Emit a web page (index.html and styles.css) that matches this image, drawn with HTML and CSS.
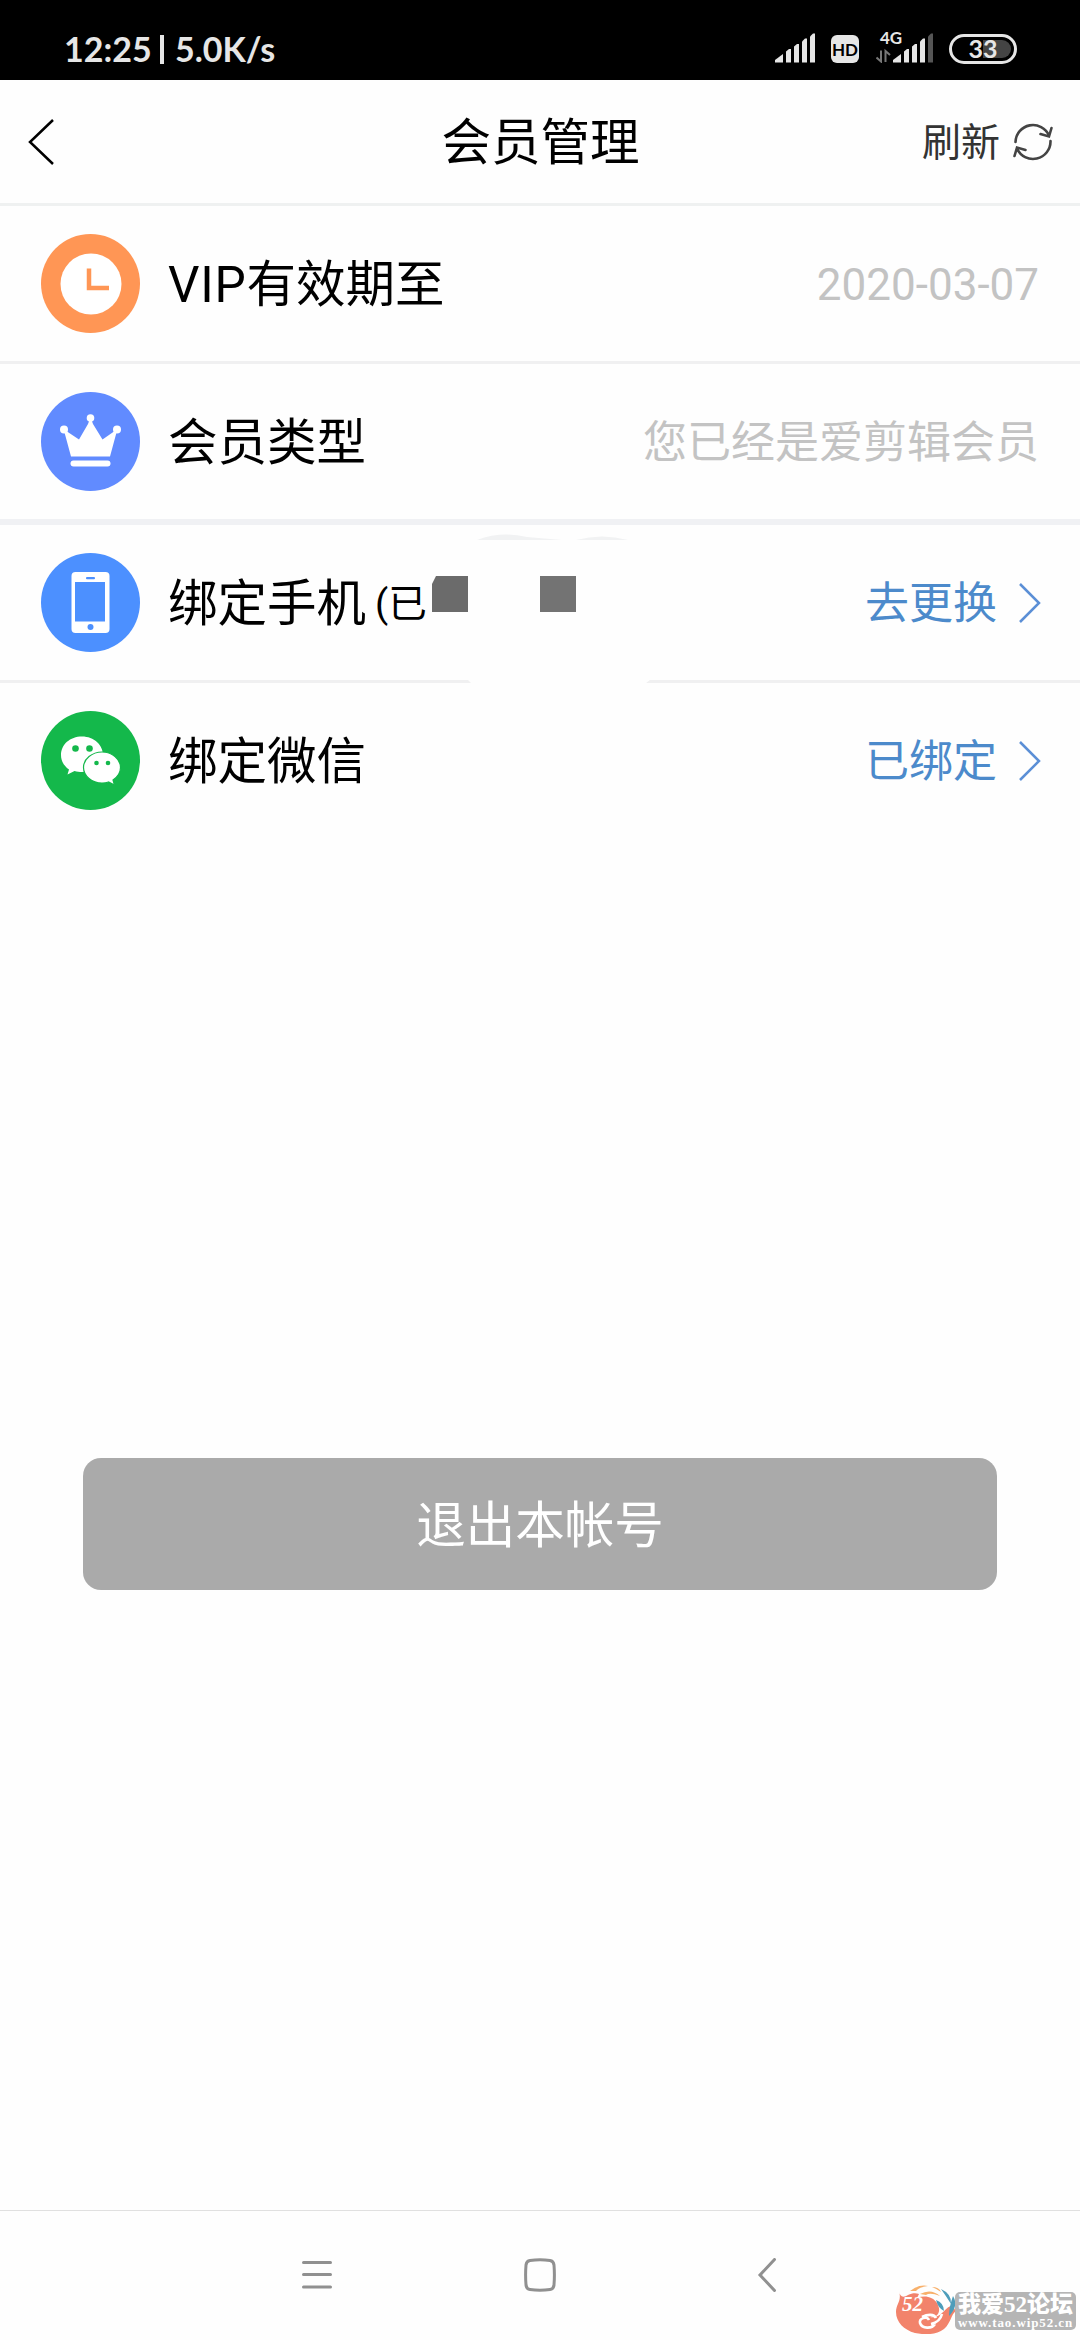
FILE: index.html
```
<!DOCTYPE html>
<html lang="zh-CN">
<head>
  <meta charset="UTF-8" />
  <meta name="viewport" content="width=device-width, initial-scale=1.0"/>
  <title>会员管理</title>
  <link rel="stylesheet" href="styles.css">
</head>
<body>
  <div class="status-bar">
    <div class="status-left">
      <span class="time">12:25</span>
      <span class="divider"></span>
      <span class="speed">5.0K/s</span>
    </div>
    <div class="status-right">
      <svg class="signal" width="41" height="30" viewBox="0 0 41 30" fill="#e6e6e6">
        <path d="M0 29.500v-2.500l8-6v8.500z"/>
        <path d="M11 29.500v-11l3-2.500h2v13.500z"/>
        <path d="M19 29.500v-16l3-2.500h2v18.500z"/>
        <path d="M27 29.500v-21l3-3h2v24z"/>
        <path d="M35 29.500v-26l3-3h2v29z"/>
      </svg>
      <span class="hd">HD</span>
      <div class="mobile">
        <span class="net">4G</span>
        <svg width="58" height="30" viewBox="0 0 58 30" fill="#e6e6e6">
          <path d="M5 17.500v11l-4.500-4M9.500 29v-11l4.500 4" fill="none" stroke="#777" stroke-width="2"/>
          <path d="M17 29.500v-2.500l8-6v8.500z"/>
          <path d="M28 29.500v-11l3-2.500h2v13.500z"/>
          <path d="M36 29.500v-16l3-2.500h2v18.500z"/>
          <path d="M44 29.500v-21l3-3h2v24z"/>
          <path d="M52 29.500v-26l3-3h2v29z" fill="#555"/>
        </svg>
      </div>
      <div class="battery"><span>33</span></div>
    </div>
  </div>

  <header class="header">
    <svg class="back" width="26" height="46" viewBox="0 0 26 46" fill="none" stroke="#000" stroke-width="2.500">
      <path d="M25 1L2 23l23 22"/>
    </svg>
    <h1>会员管理</h1>
    <div class="refresh">
      <span>刷新</span>
      <svg width="40" height="38" viewBox="0 0 40 38" fill="none" stroke="#444" stroke-width="2.600" stroke-linecap="round">
        <path d="M2.500 19A17.500 17.500 0 0 1 36 12.500M27.500 11l8.500 2.500 2.500-8.500"/>
        <path d="M37.500 18A17.500 17.500 0 0 1 4 25.500M12.500 27L4 24.500 1.500 33"/>
      </svg>
    </div>
  </header>

  <main class="list">
    <div class="row">
      <svg class="icon" viewBox="0 0 99 99">
        <circle cx="49.500" cy="49.500" r="49.500" fill="#ff9655"/>
        <circle cx="50" cy="50" r="30.500" fill="#fff"/>
        <path d="M48 34.500v19.500h20" fill="none" stroke="#ff9655" stroke-width="4.500"/>
      </svg>
      <span class="label"><span class="vip">VIP</span>有效期至</span>
      <span class="value">2020-03-07</span>
    </div>

    <div class="row thick">
      <svg class="icon" viewBox="0 0 99 99">
        <circle cx="49.500" cy="49.500" r="49.500" fill="#618bff"/>
        <g fill="#fff">
          <circle cx="49.500" cy="26" r="3.800"/>
          <circle cx="23" cy="37.500" r="4"/>
          <circle cx="76" cy="37.500" r="4"/>
          <path d="M48.500 28h2l1.500 4 9.500 15.500L73 39.500l2.500 1L69 64.500H30L23.500 40.500l2.500-1 12 8L47 32z"/>
          <rect x="29.500" y="68.500" width="40" height="6" rx="3"/>
        </g>
      </svg>
      <span class="label">会员类型</span>
      <span class="value">您已经是爱剪辑会员</span>
    </div>

    <div class="row">
      <svg class="icon" viewBox="0 0 99 99">
        <circle cx="49.500" cy="49.500" r="49.500" fill="#4c90ff"/>
        <rect x="30.500" y="19" width="38" height="61" rx="4" fill="#fff"/>
        <rect x="34" y="29" width="30" height="39.500" fill="#4c90ff"/>
        <rect x="45" y="24" width="9" height="2.200" rx="1" fill="#4c90ff"/>
        <circle cx="49.500" cy="74" r="3" fill="#4c90ff"/>
      </svg>
      <span class="label">绑定手机</span>
      <span class="note">(已</span>
      <span class="action">去更换</span>
      <svg class="arrow" viewBox="0 0 22 40"><path d="M1 1l19 19L1 39"/></svg>
      <!-- hidden phone number -->
      <svg class="mask" width="186" height="152" viewBox="0 0 186 152">
        <path d="M10 7q24-9 50-3l35 3zM109 7q26-7 52 0z" fill="#f1f2f3"/>
        <path d="M0 146h184l-6 5H5z" fill="#fefefe"/>
      </svg>
      <span class="block first"></span>
      <span class="block second"></span>
    </div>

    <div class="row last">
      <svg class="icon" viewBox="0 0 99 99">
        <circle cx="49.500" cy="49.500" r="49.500" fill="#14b84b"/>
        <path d="M41 25.500c-12 0-21 8-21 18.500 0 6 3 11 8 14.500l-1.500 5 7-3.500c2.500.8 5 1 7.500 1C53 61 62 54 62 44S53 25.500 41 25.500z" fill="#fff"/>
        <circle cx="34.500" cy="37.500" r="3.300" fill="#14b84b"/>
        <circle cx="48.500" cy="37.500" r="3.300" fill="#14b84b"/>
        <path d="M61 41c-10 0-18.500 7-18.500 15.500S51 72 61 72c2.500 0 4.500-.3 6.500-1l6 3-1.500-5c4.500-3 7.500-7.500 7.500-12.500C79.500 48 71 41 61 41z" fill="#fff" stroke="#14b84b" stroke-width="1.200"/>
        <circle cx="55.500" cy="52" r="2.300" fill="#14b84b"/>
        <circle cx="67" cy="52" r="2.300" fill="#14b84b"/>
      </svg>
      <span class="label">绑定微信</span>
      <span class="action">已绑定</span>
      <svg class="arrow" viewBox="0 0 22 40"><path d="M1 1l19 19L1 39"/></svg>
    </div>
  </main>

  <button class="logout" type="button">退出本帐号</button>

  <nav class="nav-bar">
    <svg width="30" height="32" viewBox="0 0 30 32"><path d="M1.500 3.500h27M1.500 15.500h27M1.500 28h27"/></svg>
    <svg class="home" width="32" height="34" viewBox="0 0 32 34"><path d="M6 2.500Q16 1 26 2.500 29.500 3 30 7q.8 10 0 20-.5 4-4 4.500-10 1.500-20 0-3.500-.5-4-4.500-.8-10 0-20 .5-4 4-4.500z"/></svg>
    <svg width="20" height="34" viewBox="0 0 20 34"><path d="M17.500 1.500L3 17l14.500 15.500"/></svg>
  </nav>

  <div class="watermark">
    <svg width="64" height="50" viewBox="0 0 64 50">
      <path d="M4 7c1 6 4 7 9 4 4-2 8-2 11-1l-2 4c8-3 16-1 20 5 3 5 3 10-1 13l-6 1c5 1 9-1 12-4 5-4 8-9 11-6l3 4c-5 3-5 12-12 18-8 6-19 6-29 4C9 46 1 38 1 28 1 20 7 17 4 7z" fill="#f2836b"/>
      <path d="M40 40c-3 5-13 5-15-1-1-5 7-7 9-3M27 33c6-3 12-3 14 1M36 40q9-2 11-10" fill="none" stroke="#fff" stroke-width="2.600"/>
      <path d="M15 7q9-7 18-5-9 1-12 5zM25 10q11-6 20 2-10-4-14-1zM37 3q7 0 9 5-4-3-9-5z" fill="#f8b06a"/>
      <path d="M46 5q11 5 10 15-5-8-10-15zM58 12q6 10-4 20 0-9 4-20zM41 16q8 3 8 11-6-3-8-11z" fill="#4d9dba"/>
      <text class="mark-num" x="7" y="27">52</text>
    </svg>
    <div class="mark-text">
      <span class="mark-name">我爱52论坛</span>
      <span class="mark-url">www.tao.wip52.cn</span>
    </div>
  </div>
</body>
</html>
```
FILE: styles.css
```
* {
  box-sizing: border-box;
}

body {
  margin: 0;
  height: 2340px;
  display: flex;
  flex-direction: column;
  position: relative;
  background: #fefefe;
  font-family: Roboto, "Noto Sans CJK SC", sans-serif;
  color: #000;
}

svg {
  display: block;
  flex: none;
}

/* status bar */
.status-bar {
  height: 80px;
  background: #000;
  color: #e6e6e6;
  display: flex;
  justify-content: space-between;
  padding: 0 63px 0 64px;
  font-family: Lato, sans-serif;
  font-weight: bold;
}

.status-left {
  display: flex;
  align-items: center;
  padding-top: 19px;
  font-size: 34px;
  line-height: 60px;
}

.time {
  width: 96px;
  margin-top: -2px;
}

.divider {
  width: 4px;
  height: 29px;
  background: #e6e6e6;
  margin-right: 11px;
}

.speed {
  margin-top: -2px;
}

.status-right {
  display: flex;
  align-items: flex-start;
  padding-top: 33px;
}

.hd {
  width: 28px;
  height: 28px;
  margin: 2px 17px 0 15px;
  border-radius: 6px;
  background: #e6e6e6;
  color: #000;
  font-size: 17px;
  line-height: 29px;
  text-align: center;
}

.mobile {
  position: relative;
  margin-right: 15px;
}

.net {
  position: absolute;
  left: 4px;
  top: -3px;
  font-size: 17px;
  line-height: 16px;
}

.battery {
  width: 68px;
  height: 30px;
  margin-top: 1px;
  border: 3px solid #e6e6e6;
  border-radius: 15px;
  padding: 3px;
  font-size: 25px;
  line-height: 17px;
  text-align: center;
}

.battery span {
  display: block;
  height: 18px;
  border-radius: 9px;
  background: linear-gradient(90deg, #000 50%, #444 50%);
}

/* header */
.header {
  height: 126px;
  border-bottom: 3px solid #eff1f1;
  display: grid;
  grid-template-columns: 1fr auto 1fr;
  align-items: center;
  padding: 0 27px 0 28px;
}

h1 {
  margin: 0;
  padding-top: 3px;
  font-size: 49.5px;
  font-weight: normal;
  line-height: 60px;
}

.refresh {
  justify-self: end;
  display: flex;
  align-items: center;
  gap: 13px;
  font-size: 39px;
  line-height: 50px;
  color: #333;
}

.refresh span {
  padding-top: 3px;
}

/* list */
.row {
  position: relative;
  height: 158px;
  border-bottom: 3px solid #f0f0f1;
  display: flex;
  align-items: center;
  padding: 0 41px 0 41px;
}

.row.thick {
  height: 161px;
  border-bottom: 6px solid #f0f1f4;
}

.row.last {
  border-bottom: none;
  height: 155px;
}

.icon {
  width: 99px;
  height: 99px;
  margin-right: 28px;
}

.label {
  padding-top: 3px;
  font-size: 49.5px;
  line-height: 60px;
}

.vip {
  letter-spacing: 0.8px;
}

.value,
.action {
  margin-left: auto;
  padding-top: 3px;
  font-size: 44px;
  line-height: 60px;
  color: #c3c3c3;
}

.note {
  margin-left: 9px;
  padding-top: 3px;
  font-size: 38.5px;
  line-height: 60px;
}

.action {
  color: #4c8acb;
}

.arrow {
  width: 22px;
  height: 40px;
  margin-left: 22px;
  margin-right: -2px;
  fill: none;
  stroke: #5b8fd6;
  stroke-width: 2.5;
}

.mask {
  position: absolute;
  left: 467px;
  top: 8px;
}

.block {
  position: absolute;
  top: 51px;
  width: 36px;
  height: 36px;
}

.block.first {
  left: 432px;
  background: #6b6b6b;
  clip-path: polygon(4px 0, 100% 0, 100% 100%, 0 100%, 0 8px);
}

.block.second {
  left: 540px;
  background: #737373;
}

/* logout */
.logout {
  width: 914px;
  height: 132px;
  margin: 620px auto 0;
  padding: 3px 0 0;
  border: none;
  border-radius: 18px;
  background: #aaa;
  color: #fff;
  font-family: inherit;
  font-size: 49.5px;
  line-height: 60px;
}

/* bottom navigation */
.nav-bar {
  height: 130px;
  margin-top: auto;
  border-top: 1px solid #e0e0e0;
  display: flex;
  justify-content: space-between;
  align-items: center;
  padding: 0 303px 2px 302px;
  fill: none;
  stroke: #909090;
  stroke-width: 3;
  stroke-linecap: round;
}

.home {
  margin-right: 9px;
}

/* forum watermark */
.watermark {
  position: absolute;
  left: 895px;
  top: 2284px;
  display: flex;
}

.mark-num {
  font: bold italic 21px "Liberation Serif", serif;
  fill: #fff;
}

.mark-text {
  width: 121px;
  height: 38px;
  margin: 8px 0 0 -4px;
  border-radius: 5px;
  background: #b5b5b5;
  color: #fff;
  display: flex;
  flex-direction: column;
  align-items: center;
}

.mark-name {
  font: 900 23px/25px "Liberation Serif", "Noto Sans CJK SC", serif;
  white-space: nowrap;
}

.mark-url {
  font: bold 13px/11px "Liberation Serif", serif;
  letter-spacing: 0.9px;
  white-space: nowrap;
}
```
